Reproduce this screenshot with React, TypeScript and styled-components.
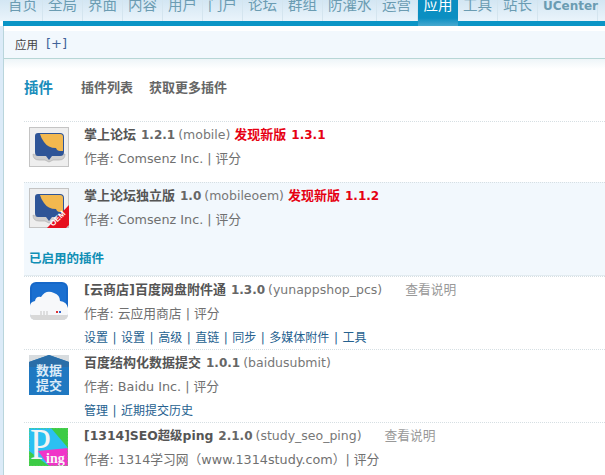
import React from "react";
import styled, { createGlobalStyle } from "styled-components";

const GlobalStyle = createGlobalStyle`
  html, body { margin: 0; padding: 0; background: #fff; }
  * { box-sizing: border-box; }
`;

const FONT = `"DejaVu Sans", "Noto Sans CJK SC", sans-serif`;

const Page = styled.div`
  width: 605px;
  height: 475px;
  overflow: hidden;
  background: #fff;
  font-family: ${FONT};
  font-size: 12px;
  color: #666;
`;

const TopNav = styled.div`
  display: flex;
  height: 21px;
  padding-left: 3px;
  background: linear-gradient(#d3e6f3, #eaf4fb);
`;

const NavItem = styled.div<{ $active?: boolean; $w: number }>`
  width: ${(p) => p.$w}px;
  height: ${(p) => (p.$active ? 26 : 21)}px;
  flex: none;
  padding-left: ${(p) => (p.$active ? 0 : 5)}px;
  font-size: 14.5px;
  line-height: 11px;
  white-space: nowrap;
  color: ${(p) => (p.$active ? "#fff" : "#6b9cb2")};
  border-right: ${(p) => (p.$active ? "0" : "1px solid #d4e5ef")};
  background: ${(p) => (p.$active ? "linear-gradient(#0b8fc2 0, #0b8fc2 18px, #49a9cf 26px)" : "none")};
  position: relative;
  z-index: 1;
  text-align: ${(p) => (p.$active ? "center" : "left")};
`;

const NavLatin = styled.span`
  font-family: "DejaVu Sans", sans-serif;
  font-size: 12px;
  font-weight: bold;
  line-height: 10px;
`;

const Bar = styled.div`
  height: 5px;
  margin-left: 3px;
  background: #0b95c6;
`;

const Frame = styled.div`
  height: 449px;
  background: #dcebf8;
  padding-left: 3px;
`;

const Main = styled.div`
  height: 100%;
  padding-top: 5px;
  background: #fff;
  border-left: 1px solid #b9d5dc;
`;

const SubNav = styled.div`
  display: flex;
  align-items: center;
  gap: 8px;
  height: 28px;
  padding: 0 0 2px 11px;
  background: #f2f8fd;
  border-bottom: 1px solid #b7d6d6;
  font-size: 11.5px;
  color: #444;
`;

const AddLink = styled.span`
  font-size: 13px;
  color: #41639a;
  font-family: "DejaVu Sans", sans-serif;
`;

const Shade = styled.div`
  height: 10px;
  background: linear-gradient(#eef5f8, #fff);
`;

const TitleRow = styled.div`
  display: flex;
  align-items: center;
  height: 52px;
  padding: 0 0 18px 20px;
`;

const Title = styled.h3`
  margin: 0 28px 0 0;
  font-size: 14.5px;
  font-weight: bold;
  color: #1a8dbb;
`;

const TitleLink = styled.span`
  margin-right: 16px;
  font-size: 13px;
  font-weight: bold;
  color: #666;
`;

const List = styled.div`
  margin-left: 20px;
`;

const Row = styled.div<{ $tint?: boolean; $h: number; $top: number }>`
  display: grid;
  grid-template-columns: 60px 1fr;
  height: ${(p) => p.$h}px;
  padding-top: ${(p) => p.$top}px;
  border-top: 1px dotted #d6dfe3;
  background: ${(p) => (p.$tint ? "#f2f8fd" : "#fff")};
`;

const IconCell = styled.div`
  padding: 4px 0 0 5px;
  svg { display: block; }
`;

const Line = styled.div`
  height: 24px;
  line-height: 24px;
  font-size: 12.75px;
  white-space: nowrap;
  color: #707070;
`;

const Name = styled.b<{ $size?: number }>`
  font-size: ${(p) => p.$size ?? 13}px;
  color: #555;
`;

const Version = styled.b`
  margin-left: 5px;
  font-size: 12px;
  color: #666;
`;

const Ident = styled.span`
  margin-left: 3px;
  font-size: 12.5px;
  color: #777;
`;

const NewVersion = styled.b`
  margin-left: 4px;
  font-size: 13px;
  color: #e60012;
`;

const NewNumber = styled.span`
  margin-left: 5px;
  font-size: 12px;
`;

const Notes = styled.span`
  margin-left: 23px;
  color: #999;
`;

const Links = styled(Line)`
  font-size: 12px;
  word-spacing: 0.7px;
  color: #25618f;
`;

const Section = styled.div`
  height: 35px;
  padding: 6px 0 0 5px;
  line-height: 24px;
  font-size: 12.5px;
  font-weight: bold;
  color: #0f8fb5;
  background: #f2f8fd;
  border-bottom: 1px solid #e2ebf0;
`;

const MobileIcon = ({ oem }: { oem?: boolean }) => (
  <svg width="40" height="40" viewBox="0 0 40 40">
    <rect x="0.5" y="0.5" width="39" height="39" fill="#eeeeee" stroke="#c4c4c4" />
    <path d="M4 27 Q4 33 10 33 H16 L20 35 L24 33 H30 Q36 33 36 27 L34 28 H6 Z" fill="#cfcfcf" stroke="#b0b0b0" strokeWidth="0.7" />
    <path d="M9 6 H31 Q35 6 35 10 V25 Q35 29 31 29 H23 L20 33 L17 29 H9 Q6 29 6 25 V9 Q6 6 9 6 Z" fill="#2f5597" />
    <path d="M11 7 H31 Q34 7 34 10 V24 H31 Q28 24 27 21 Q19 21 15 15 Q12 11 11 7 Z" fill="#f2b84f" />
    {oem && <path d="M40 17 V37 L37 40 H18 Z" fill="#e60f1e" />}
    {oem && (
      <text x="29" y="33" fontSize="8" fontWeight="bold" fill="#fff" fontFamily="Liberation Sans, sans-serif" textAnchor="middle" transform="rotate(-45 29 31)">OEM</text>
    )}
  </svg>
);

const CloudIcon = () => (
  <svg width="40" height="40" viewBox="0 0 40 40">
    <rect x="1" y="0" width="38" height="38" rx="6" fill="#1567c8" />
    <rect x="3" y="2" width="34" height="24" rx="4" fill="#1a6fd0" />
    <path d="M1 32 V24 Q1 20 6 19 Q7 14 12 15 Q17 7 25 11 Q31 13 31 19 Q38 20 39 26 V32 Q39 38 33 38 H7 Q1 38 1 32 Z" fill="#f7f8fa" />
    <path d="M1 32 Q1 38 7 38 H33 Q39 38 39 32 V33 H1 Z" fill="#d8d8d8" />
    <rect x="27" y="29" width="2" height="2" fill="#d33" />
    <rect x="30" y="29" width="2" height="2" fill="#36c" />
    <path d="M12 29 V33 M15 29 V33 M18 29 V33" stroke="#c4c4c4" />
  </svg>
);

const SubmitIcon = () => (
  <svg width="40" height="40" viewBox="0 0 40 40">
    <rect width="40" height="40" fill="#1f78c1" />
    <path d="M0 0 H40 V7 L20 0 L0 7 Z" fill="#d8dcdf" />
    <path d="M0 7 L20 0 L40 7 V12 H0 Z" fill="#2a6ea8" />
    <text x="20" y="20" fontSize="13" fontWeight="bold" fill="#dcebf7" fontFamily="Noto Sans CJK SC, sans-serif" textAnchor="middle">数据</text>
    <text x="20" y="35" fontSize="13" fontWeight="bold" fill="#dcebf7" fontFamily="Noto Sans CJK SC, sans-serif" textAnchor="middle">提交</text>
  </svg>
);

const PingIcon = () => (
  <svg width="40" height="40" viewBox="0 0 40 40">
    <rect width="39" height="38" fill="#2bc0f2" />
    <path d="M22 0 H39 V20 Z" fill="#3ccb46" />
    <path d="M0 23 L20 38 H0 Z" fill="#3ccb46" />
    <path d="M9 23 L39 20 V38 H20 Z" fill="#f036c8" />
    <text x="1" y="31" fontSize="44" fill="#f4f4f4" fontFamily="Liberation Serif, serif" textLength="21" lengthAdjust="spacingAndGlyphs">P</text>
    <text x="17" y="35" fontSize="14" fontWeight="bold" fill="#f8f8f8" fontFamily="Liberation Serif, serif">ing</text>
    <rect x="0.5" y="0.5" width="38" height="37" fill="none" stroke="#5bd35b" strokeDasharray="1 2" />
  </svg>
);

const navItems = [
  { label: "首页", w: 40 }, { label: "全局", w: 40 }, { label: "界面", w: 40 }, { label: "内容", w: 40 },
  { label: "用户", w: 40 }, { label: "门户", w: 40 }, { label: "论坛", w: 40 }, { label: "群组", w: 40 },
  { label: "防灌水", w: 54 }, { label: "运营", w: 41 },
];

const App = () => (
  <Page>
    <GlobalStyle />
    <TopNav>
      {navItems.map((n) => (
        <NavItem key={n.label} $w={n.w}>{n.label}</NavItem>
      ))}
      <NavItem $active $w={40}>应用</NavItem>
      <NavItem $w={40}>工具</NavItem>
      <NavItem $w={40}>站长</NavItem>
      <NavItem $w={60}><NavLatin>UCenter</NavLatin></NavItem>
    </TopNav>
    <Bar />
    <Frame>
      <Main>
        <SubNav>
          <span>应用</span>
          <AddLink>[+]</AddLink>
        </SubNav>
        <Shade />
        <TitleRow>
          <Title>插件</Title>
          <TitleLink>插件列表</TitleLink>
          <TitleLink>获取更多插件</TitleLink>
        </TitleRow>
        <List>
          <Row $h={61} $top={1}>
            <IconCell><MobileIcon /></IconCell>
            <div>
              <Line><Name>掌上论坛</Name><Version>1.2.1</Version><Ident>(mobile)</Ident><NewVersion>发现新版<NewNumber>1.3.1</NewNumber></NewVersion></Line>
              <Line>作者: Comsenz Inc. | 评分</Line>
            </div>
          </Row>
          <Row $tint $h={59} $top={1}>
            <IconCell><MobileIcon oem /></IconCell>
            <div>
              <Line><Name>掌上论坛独立版</Name><Version>1.0</Version><Ident>(mobileoem)</Ident><NewVersion>发现新版<NewNumber>1.1.2</NewNumber></NewVersion></Line>
              <Line>作者: Comsenz Inc. | 评分</Line>
            </div>
          </Row>
          <Section>已启用的插件</Section>
          <Row $h={73} $top={1}>
            <IconCell><CloudIcon /></IconCell>
            <div>
              <Line><Name>[云商店]百度网盘附件通</Name><Version>1.3.0</Version><Ident>(yunappshop_pcs)</Ident><Notes>查看说明</Notes></Line>
              <Line>作者: 云应用商店 | 评分</Line>
              <Links>设置 | 设置 | 高级 | 直链 | 同步 | 多媒体附件 | 工具</Links>
            </div>
          </Row>
          <Row $h={73} $top={1}>
            <IconCell><SubmitIcon /></IconCell>
            <div>
              <Line><Name>百度结构化数据提交</Name><Version>1.0.1</Version><Ident>(baidusubmit)</Ident></Line>
              <Line>作者: Baidu Inc. | 评分</Line>
              <Links>管理 | 近期提交历史</Links>
            </div>
          </Row>
          <Row $h={60} $top={1}>
            <IconCell><PingIcon /></IconCell>
            <div>
              <Line><Name $size={12.4}>[1314]SEO超级ping</Name><Version>2.1.0</Version><Ident>(study_seo_ping)</Ident><Notes>查看说明</Notes></Line>
              <Line>作者: 1314学习网（www.1314study.com）| 评分</Line>
            </div>
          </Row>
        </List>
      </Main>
    </Frame>
  </Page>
);

export default App;
